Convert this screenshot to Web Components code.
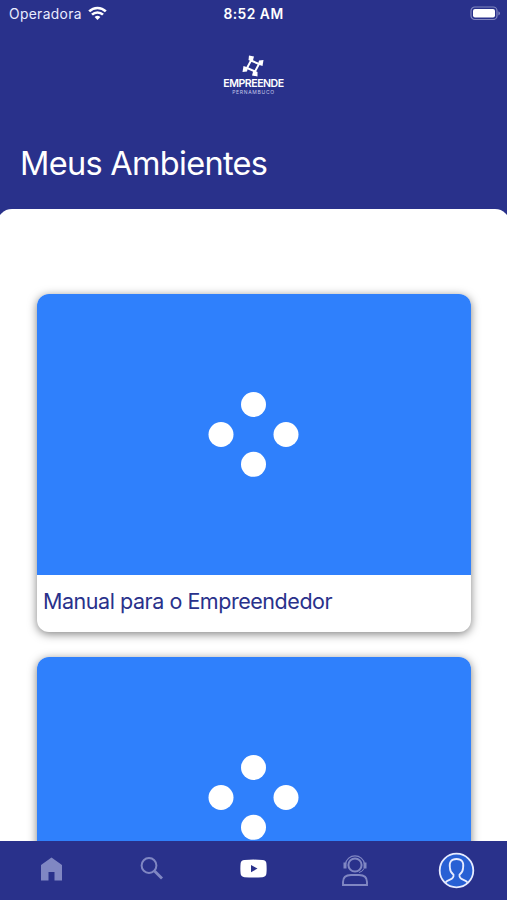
<!DOCTYPE html>
<html lang="pt-BR">
<head>
<meta charset="UTF-8">
<meta name="viewport" content="width=device-width, initial-scale=1.0">
<title>Meus Ambientes</title>
<style>
  html, body {
    margin: 0;
    height: 100%;
    overflow: hidden;
  }
  body {
    font-family: Inter, "Liberation Sans", sans-serif;
    background: #29318b;
  }
</style>
</head>
<body>
<app-screen>
  <status-bar slot="header" carrier="Operadora" time="8:52 AM"></status-bar>
  <brand-logo slot="header"></brand-logo>
  <page-title slot="header">Meus Ambientes</page-title>
  <ambiente-card>Manual para o Empreendedor</ambiente-card>
  <ambiente-card></ambiente-card>
  <tab-bar slot="footer"></tab-bar>
</app-screen>

<script>
class AppScreen extends HTMLElement {
  connectedCallback() {
    this.attachShadow({ mode: 'open' });
    this.shadowRoot.innerHTML = `
      <style>
        :host {
          display: flex;
          flex-direction: column;
          height: 100vh;
          overflow: hidden;
          background: #29318b;
        }
        header {
          flex: none;
          height: 208.5px;
        }
        main {
          flex: 1;
          min-height: 0;
          box-sizing: border-box;
          margin: 0 -3px;
          padding: 85.5px 39px 0 40px;
          display: flex;
          flex-direction: column;
          gap: 25px;
          overflow: hidden;
          background: white;
          border-radius: 15px 15px 0 0;
        }
      </style>
      <header><slot name="header"></slot></header>
      <main><slot></slot></main>
      <slot name="footer"></slot>
    `;
  }
}
customElements.define('app-screen', AppScreen);

class StatusBar extends HTMLElement {
  connectedCallback() {
    this.attachShadow({ mode: 'open' });
    this.shadowRoot.innerHTML = `
      <style>
        :host {
          display: grid;
          grid-template-columns: 1fr auto 1fr;
          align-items: center;
          height: 27px;
          padding: 0 6px 0 9px;
          color: #e9ecff;
          font-size: 13.8px;
        }
        .carrier {
          display: flex;
          align-items: center;
          gap: 6px;
          letter-spacing: 0.35px;
        }
        .time {
          margin-right: 3px;
          color: white;
          font-size: 13.8px;
          font-weight: 600;
          letter-spacing: 0.5px;
        }
        .battery {
          justify-self: end;
        }
        svg {
          display: block;
        }
      </style>
      <div class="carrier">
        <span>${this.getAttribute('carrier')}</span>
        <svg width="19" height="15" viewBox="0 0 19 15" fill="none" stroke="white" stroke-width="2.6">
          <path d="M1.2 5.4a11.8 11.8 0 0 1 16.6 0"/>
          <path d="M4 8.7a7.8 7.8 0 0 1 11 0"/>
          <path d="M9.5 14l-2.9-2.9a4.1 4.1 0 0 1 5.8 0z" fill="white" stroke="none"/>
        </svg>
      </div>
      <div class="time">${this.getAttribute('time')}</div>
      <svg class="battery" width="31" height="15" viewBox="0 0 31 15">
        <rect x="1" y="1" width="26" height="12.5" rx="3.8" fill="none" stroke="#8287c0" stroke-width="1.2"/>
        <rect x="3" y="3" width="22" height="8.5" rx="2" fill="white"/>
        <path d="M28.4 5.2c2.2 1 2.2 3.2 0 4.2z" fill="#8287c0"/>
      </svg>
    `;
  }
}
customElements.define('status-bar', StatusBar);

class BrandLogo extends HTMLElement {
  connectedCallback() {
    this.attachShadow({ mode: 'open' });
    this.shadowRoot.innerHTML = `
      <style>
        :host {
          display: flex;
          flex-direction: column;
          align-items: center;
          height: 68px;
          padding-top: 28px;
          color: white;
        }
        svg {
          display: block;
          margin-right: 2px;
        }
        .name {
          font-size: 10.6px;
          line-height: 13px;
          font-weight: 600;
          letter-spacing: -0.5px;
        }
        .place {
          margin-top: -1.5px;
          font-size: 5px;
          line-height: 6px;
          letter-spacing: 0.7px;
          color: #c3c7ea;
        }
      </style>
      <svg width="24" height="22" viewBox="0 0 24 22">
        <path d="M10 5.5l8 3.500-4 7.500-8-3.500z" fill="none" stroke="white" stroke-width="2"/>
        <g fill="white">
          <path d="M8 .5l5 1-1.500 5.500-4-2z"/>
          <path d="M22.500 5l-1 6-4.500-1.500 1-4z"/>
          <path d="M16.500 21.500l-5.500-1 1.500-5.500 4 2z"/>
          <path d="M1.500 17l1-6 4.500 1.500-1 4z"/>
        </g>
      </svg>
      <div class="name">EMPREENDE</div>
      <div class="place">PERNAMBUCO</div>
    `;
  }
}
customElements.define('brand-logo', BrandLogo);

class PageTitle extends HTMLElement {
  connectedCallback() {
    this.attachShadow({ mode: 'open' });
    this.shadowRoot.innerHTML = `
      <style>
        :host {
          display: block;
          padding: 21px 0 0 20px;
        }
        h1 {
          margin: 0;
          font-size: 32.5px;
          line-height: 40px;
          font-weight: 400;
          letter-spacing: -0.7px;
          white-space: nowrap;
          color: white;
        }
      </style>
      <h1><slot></slot></h1>
    `;
  }
}
customElements.define('page-title', PageTitle);

class AmbienteCard extends HTMLElement {
  connectedCallback() {
    this.attachShadow({ mode: 'open' });
    this.shadowRoot.innerHTML = `
      <style>
        :host {
          display: block;
          flex: none;
          height: 338px;
          border-radius: 12px;
          background: white;
          box-shadow: 0 2px 10px rgba(0, 0, 0, 0.5);
        }
        .cover {
          display: flex;
          align-items: center;
          justify-content: center;
          height: 280.5px;
          border-radius: 12px 12px 0 0;
          background: #2f80fc;
        }
        .caption {
          padding: 11px 6px 0;
          font-size: 21.5px;
          line-height: 30px;
          letter-spacing: -0.46px;
          white-space: nowrap;
          color: #29318b;
        }
      </style>
      <div class="cover">
        <svg width="92" height="86" viewBox="0 0 92 86" fill="white">
          <circle cx="45.5" cy="13.5" r="12.5"/>
          <circle cx="13" cy="43.5" r="12.5"/>
          <circle cx="78" cy="43.5" r="12.5"/>
          <circle cx="45.5" cy="73.3" r="12.5"/>
        </svg>
      </div>
      <div class="caption"><slot></slot></div>
    `;
  }
}
customElements.define('ambiente-card', AmbienteCard);

class TabBar extends HTMLElement {
  connectedCallback() {
    this.attachShadow({ mode: 'open' });
    this.shadowRoot.innerHTML = `
      <style>
        :host {
          display: grid;
          grid-template-columns: repeat(5, 1fr);
          flex: none;
          height: 59.5px;
          background: #29318b;
        }
        .tab {
          display: flex;
          justify-content: center;
          color: #8087c3;
        }
        .tab.active {
          color: white;
        }
        svg {
          display: block;
        }
      </style>
      <div class="tab">
        <svg width="40" height="59" viewBox="0 0 40 59" fill="currentColor">
          <path d="M20.500 16.500L31 24v15.500h-7.500V31h-6v8.500H10V24z"/>
        </svg>
      </div>
      <div class="tab">
        <svg width="40" height="59" viewBox="0 0 40 59" fill="none" stroke="currentColor">
          <circle cx="17" cy="24.500" r="7.400" stroke-width="2"/>
          <path d="M22.500 30l7.500 7.500" stroke-width="2.800"/>
        </svg>
      </div>
      <div class="tab active">
        <svg width="40" height="59" viewBox="0 0 40 59">
          <path d="M11.500 19q9-.8 18 0 3.700.3 3.900 3.500.5 5.500 0 10-.3 3.300-3.900 3.700-9 .8-18 0-3.600-.4-3.900-3.700-.5-5 0-10 .3-3.200 3.900-3.500z" fill="currentColor"/>
          <path d="M18 24l6.500 3.600-6.500 3.600z" fill="#29318b"/>
        </svg>
      </div>
      <div class="tab">
        <svg width="40" height="59" viewBox="0 0 40 59" fill="none" stroke="currentColor">
          <circle cx="20" cy="24" r="6.600" stroke-width="2"/>
          <path d="M10.500 23a9.600 9.600 0 0 1 19 0" stroke-width="1.200"/>
          <path d="M10 21.500v6M30 21.500v6" stroke-width="3"/>
          <path d="M29 27.500q-1 3-5 4" stroke-width="1"/>
          <path d="M8 44v-3q0-7 8-7h8q8 0 8 7v3z" stroke-width="1.900"/>
        </svg>
      </div>
      <div class="tab">
        <svg width="40" height="59" viewBox="0 0 40 59">
          <circle cx="20.500" cy="29.500" r="16.800" fill="#2860d4" stroke="#e8ecff" stroke-width="1.800"/>
          <path d="M9.500 41.500q1-1.500 4.500-2.800 4-1.500 3.500-5-3.600-3-3.600-7Q12.500 18 20.500 18t6.600 8.700q0 4-3.600 7-.5 3.500 3.500 5 3.500 1.300 4.500 2.800" fill="none" stroke="#e8ecff" stroke-width="1.800"/>
        </svg>
      </div>
    `;
  }
}
customElements.define('tab-bar', TabBar);
</script>
</body>
</html>
